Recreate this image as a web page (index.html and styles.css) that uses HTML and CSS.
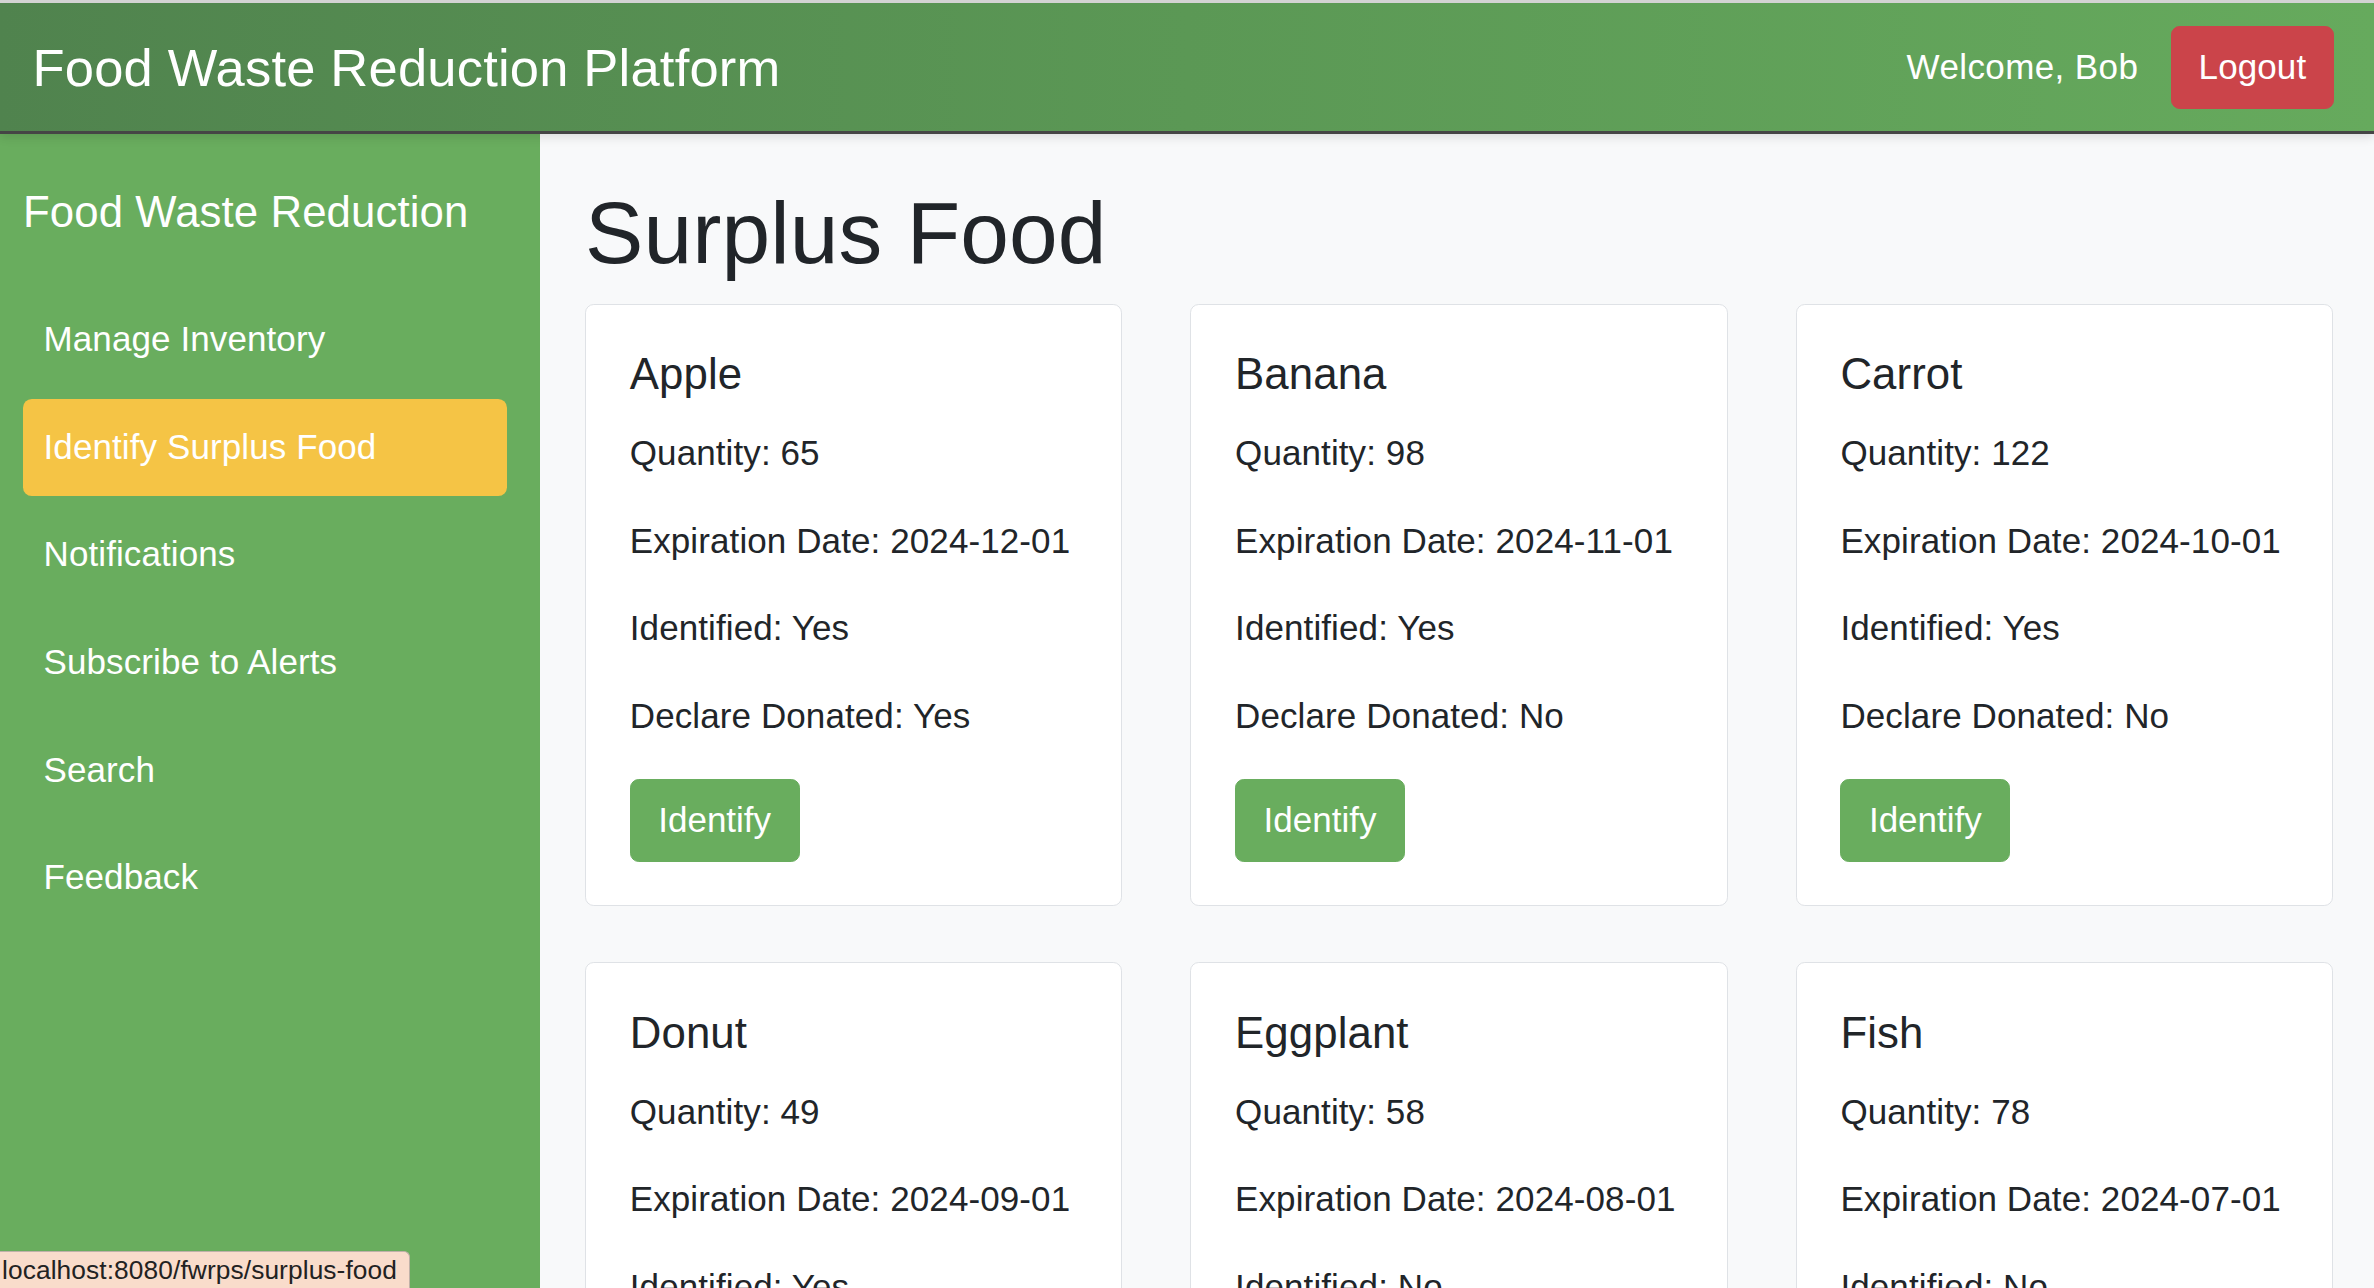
FILE: index.html
```html
<!DOCTYPE html>
<html lang="en">
<head>
<meta charset="utf-8">
<title>Surplus Food - Food Waste Reduction Platform</title>
<link rel="stylesheet" href="styles.css">
</head>
<body>
<header class="topbar">
  <div class="brand">Food Waste Reduction Platform</div>
  <div class="user">
    <span class="welcome">Welcome, Bob</span>
    <a class="btn-logout" href="#">Logout</a>
  </div>
</header>
<div class="layout">
  <aside class="sidebar">
    <h4 class="sidebar-title">Food Waste Reduction</h4>
    <nav class="nav">
      <a class="nav-link" href="#">Manage Inventory</a>
      <a class="nav-link active" href="#">Identify Surplus Food</a>
      <a class="nav-link" href="#">Notifications</a>
      <a class="nav-link" href="#">Subscribe to Alerts</a>
      <a class="nav-link" href="#">Search</a>
      <a class="nav-link" href="#">Feedback</a>
    </nav>
  </aside>
  <main class="content">
    <h1 class="page-title">Surplus Food</h1>
    <div class="cards">
      <div class="card"><div class="card-body">
        <h5 class="card-title">Apple</h5>
        <p>Quantity: 65</p>
        <p>Expiration Date: 2024-12-01</p>
        <p>Identified: Yes</p>
        <p>Declare Donated: Yes</p>
        <button class="btn-identify">Identify</button>
      </div></div>
      <div class="card"><div class="card-body">
        <h5 class="card-title">Banana</h5>
        <p>Quantity: 98</p>
        <p>Expiration Date: 2024-11-01</p>
        <p>Identified: Yes</p>
        <p>Declare Donated: No</p>
        <button class="btn-identify">Identify</button>
      </div></div>
      <div class="card"><div class="card-body">
        <h5 class="card-title">Carrot</h5>
        <p>Quantity: 122</p>
        <p>Expiration Date: 2024-10-01</p>
        <p>Identified: Yes</p>
        <p>Declare Donated: No</p>
        <button class="btn-identify">Identify</button>
      </div></div>
      <div class="card"><div class="card-body">
        <h5 class="card-title">Donut</h5>
        <p>Quantity: 49</p>
        <p>Expiration Date: 2024-09-01</p>
        <p>Identified: Yes</p>
        <p>Declare Donated: No</p>
        <button class="btn-identify">Identify</button>
      </div></div>
      <div class="card"><div class="card-body">
        <h5 class="card-title">Eggplant</h5>
        <p>Quantity: 58</p>
        <p>Expiration Date: 2024-08-01</p>
        <p>Identified: No</p>
        <p>Declare Donated: No</p>
        <button class="btn-identify">Identify</button>
      </div></div>
      <div class="card"><div class="card-body">
        <h5 class="card-title">Fish</h5>
        <p>Quantity: 78</p>
        <p>Expiration Date: 2024-07-01</p>
        <p>Identified: No</p>
        <p>Declare Donated: No</p>
        <button class="btn-identify">Identify</button>
      </div></div>
    </div>
  </main>
</div>
<div class="status-tip">localhost:8080/fwrps/surplus-food</div>
</body>
</html>
```
FILE: styles.css
```css
html, body {
  margin: 0;
  height: 100%;
}

body {
  box-sizing: border-box;
  display: flex;
  flex-direction: column;
  overflow: hidden;
  border-top: 3px solid #d3d3d3;
  background: #f8f9fa;
  color: #212529;
  font-family: "Liberation Sans", Arial, Helvetica, sans-serif;
  font-size: 35px;
  line-height: 1.5;
  letter-spacing: 0.1px;
}

.topbar {
  position: relative;
  z-index: 2;
  flex-shrink: 0;
  height: 128px;
  display: flex;
  align-items: center;
  justify-content: space-between;
  padding: 0 40px 0 32.5px;
  background: linear-gradient(90deg, #50834e 0%, #5b9855 50%, #66aa5d 100%);
  border-bottom: 3px solid #454545;
  box-shadow: 0 3px 10px rgba(0, 0, 0, 0.12);
  color: #fff;
}

.brand {
  font-size: 52.5px;
  line-height: 1.2;
  letter-spacing: 0.2px;
}

.user {
  display: flex;
  align-items: center;
  gap: 32.5px;
}

.welcome {
  color: #fff;
  letter-spacing: 0.4px;
}

.btn-logout {
  display: inline-block;
  padding: 14.25px 26.75px;
  border: 1px solid #cb444a;
  border-radius: 8.75px;
  background: #cb444a;
  color: #fff;
  line-height: 1.5;
  text-decoration: none;
}

.layout {
  flex: 1;
  min-height: 0;
  display: flex;
}

.sidebar {
  box-sizing: border-box;
  flex-shrink: 0;
  width: 540px;
  padding: 52px 33px 0 23px;
  background: #69ad5e;
}

.sidebar-title {
  margin: 0 0 52.5px;
  color: #fff;
  font-size: 43.75px;
  font-weight: 400;
  line-height: 1.2;
}

.nav {
  display: flex;
  flex-direction: column;
  gap: 10.6px;
}

.nav-link {
  display: block;
  padding: 22.25px 20.5px;
  border-radius: 8.75px;
  color: #fff;
  line-height: 52.5px;
  text-decoration: none;
}

.nav-link.active {
  background: #f5c445;
}

.content {
  flex: 1;
  min-width: 0;
  overflow: hidden;
  padding: 47px 41px 0 45px;
}

.page-title {
  margin: 0 0 17.5px;
  font-size: 87.5px;
  font-weight: 400;
  line-height: 1.2;
}

.cards {
  display: grid;
  grid-template-columns: repeat(3, 1fr);
  column-gap: 68px;
  row-gap: 56px;
}

.card {
  background: #fff;
  border: 1px solid #dfe2e6;
  border-radius: 8.75px;
}

.card-body {
  padding: 43.75px;
}

.card-title {
  margin: 0 0 26.25px;
  font-size: 43.75px;
  font-weight: 400;
  line-height: 1.2;
}

.card p {
  margin: 0 0 35px;
}

.btn-identify {
  margin-top: 2px;
  padding: 14px 27.5px;
  border: 1px solid #69ad5e;
  border-radius: 8.75px;
  background: #69ad5e;
  color: #fff;
  font: inherit;
  line-height: 1.5;
  cursor: pointer;
}

.status-tip {
  position: fixed;
  left: 0;
  bottom: 0;
  z-index: 5;
  padding: 2px 12px 1px 2px;
  background: #f9dccb;
  border-top: 1px solid #bfb1a8;
  border-right: 1px solid #bfb1a8;
  border-top-right-radius: 6px;
  color: #222;
  font-size: 26.3px;
  line-height: 33px;
  letter-spacing: 0.1px;
}
```
